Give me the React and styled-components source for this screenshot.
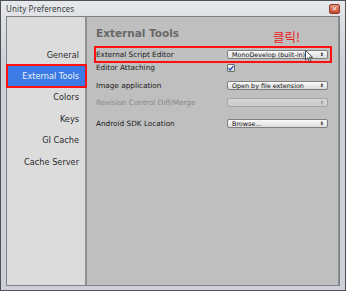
import React from 'react'
import styled, { createGlobalStyle } from 'styled-components'

const Global = createGlobalStyle`
  html, body {
    margin: 0;
    padding: 0;
    background: #ffffff;
  }
  * {
    box-sizing: border-box;
  }
`

export const Window = styled.div`
  width: 346px;
  height: 291px;
  display: flex;
  flex-direction: column;
  border: 1px solid #4d5055;
  padding: 0 5px 4px 5px;
  background: linear-gradient(#e6e8eb, #ced2d8 20%, #cdd1d7);
  font-family: "DejaVu Sans", Verdana, sans-serif;
`

export const TitleBar = styled.div`
  height: 15px;
  display: flex;
  align-items: center;
  justify-content: space-between;
`

export const Title = styled.span`
  font-family: "Noto Sans", "Open Sans", sans-serif;
  font-size: 8px;
  color: #3a3d42;
  letter-spacing: 0.1px;
`

export const CloseButton = styled.div`
  width: 11px;
  height: 10px;
  border: 1px solid #8e3b2c;
  border-radius: 2px;
  background: linear-gradient(#e69580, #c4482f);
  display: flex;
  align-items: center;
  justify-content: center;
  color: #ffffff;
  font-size: 6px;
  font-weight: bold;
  line-height: 1;
`

export const Client = styled.div`
  flex: 1;
  min-height: 0;
  display: flex;
  border: 1px solid #7d8188;
`

export const Sidebar = styled.div`
  width: 80px;
  background: #dcdcdc;
  border-right: 2px solid #8f8f8f;
  padding-top: 27px;
  display: flex;
  flex-direction: column;
`

export const NavItem = styled.div`
  height: 21.4px;
  display: flex;
  align-items: center;
  justify-content: flex-end;
  padding-right: 6px;
  font-size: 8.2px;
  color: ${p => (p.$active ? '#eef3ff' : '#2b2b2b')};
  background: ${p => (p.$active ? '#3b7be3' : 'transparent')};
  position: relative;
  margin-left: -1px;

  ${p => p.$active && `
    &::after {
      content: '';
      position: absolute;
      inset: -1px -2px -1px 0;
      border: 2px solid #ff1010;
    }
  `}
`

export const Main = styled.div`
  flex: 1;
  background: #bfbfbf;
  padding: 8px 10px 0 9px;
  position: relative;
  border-right: 1px solid #8d8d8d;
`

export const Heading = styled.div`
  height: 16px;
  display: flex;
  align-items: center;
  font-size: 10.5px;
  font-weight: bold;
  color: #686868;
  margin-bottom: 7px;
`

export const Row = styled.div`
  height: 13px;
  width: 232px;
  display: flex;
  align-items: center;
  margin-top: ${p => p.$gap || 0}px;
  position: relative;

  ${p => p.$highlight && `
    &::after {
      content: '';
      position: absolute;
      inset: -2px -4px -2px -2px;
      border: 2px solid #ff1010;
    }
  `}
`

export const Label = styled.span`
  width: 131px;
  font-size: 7.3px;
  color: ${p => (p.$disabled ? '#878787' : '#1a1a1a')};
  white-space: nowrap;
`

export const Dropdown = styled.div`
  width: 101px;
  height: 9px;
  display: flex;
  align-items: center;
  justify-content: space-between;
  padding: 0 3px 0 4px;
  border: 1px solid ${p => (p.$disabled ? '#a5a5a5' : '#7f7f7f')};
  border-radius: 2px;
  background: ${p => (p.$disabled
    ? 'linear-gradient(#d6d6d6, #cbcbcb)'
    : 'linear-gradient(#fafafa, #dcdcdc)')};
  font-size: 6.4px;
  color: #111111;
  white-space: nowrap;
`

export const Arrows = styled.span`
  font-size: 5px;
  color: ${p => (p.$disabled ? '#9a9a9a' : '#333')};
  line-height: 1;
`

export const Checkbox = styled.div`
  width: 8px;
  height: 8px;
  border: 1px solid #6d6d6d;
  border-radius: 1px;
  background: linear-gradient(#ffffff, #d9d9d9);
  display: flex;
  align-items: center;
  justify-content: center;
`

export const Callout = styled.span`
  position: absolute;
  left: 186px;
  top: 14px;
  font-family: "Noto Sans CJK KR", sans-serif;
  font-size: 12.5px;
  color: #ee1c1c;
  line-height: 1;
`

export const Cursor = styled.svg`
  position: absolute;
  left: 218px;
  top: 33px;
`

const rows = [
  { label: 'External Script Editor', value: 'MonoDevelop (built-in)', highlight: true },
  { label: 'Editor Attaching', check: true },
  { label: 'Image application', value: 'Open by file extension', gap: 5 },
  { label: 'Revision Control Diff/Merge', value: '', disabled: true, gap: 4 },
  { label: 'Android SDK Location', value: 'Browse...', gap: 8 },
]

const nav = ['General', 'External Tools', 'Colors', 'Keys', 'GI Cache', 'Cache Server']

export default function App() {
  return (
    <>
      <Global />
      <Window>
        <TitleBar>
          <Title>Unity Preferences</Title>
          <CloseButton>✕</CloseButton>
        </TitleBar>
        <Client>
          <Sidebar>
            {nav.map(n => (
              <NavItem key={n} $active={n === 'External Tools'}>{n}</NavItem>
            ))}
          </Sidebar>
          <Main>
            <Heading>External Tools</Heading>
            {rows.map(r => (
              <Row key={r.label} $gap={r.gap} $highlight={r.highlight}>
                <Label $disabled={r.disabled}>{r.label}</Label>
                {r.check ? (
                  <Checkbox>
                    <svg width="6" height="6" viewBox="0 0 6 6">
                      <path d="M0.6 3.2 L2.3 4.9 L5.4 0.8" stroke="#2a4fb8" strokeWidth="1.4" fill="none" />
                    </svg>
                  </Checkbox>
                ) : (
                  <Dropdown $disabled={r.disabled}>
                    <span>{r.value}</span>
                    <Arrows $disabled={r.disabled}>⬍</Arrows>
                  </Dropdown>
                )}
              </Row>
            ))}
            <Callout>클릭!</Callout>
            <Cursor width="9" height="13" viewBox="0 0 9 13">
              <path d="M0.5 0.5 L0.5 10 L2.8 7.8 L4.4 11.8 L5.9 11.1 L4.3 7.3 L7.6 7.3 Z" fill="#ffffff" stroke="#222" strokeWidth="0.8" />
            </Cursor>
          </Main>
        </Client>
      </Window>
    </>
  )
}
